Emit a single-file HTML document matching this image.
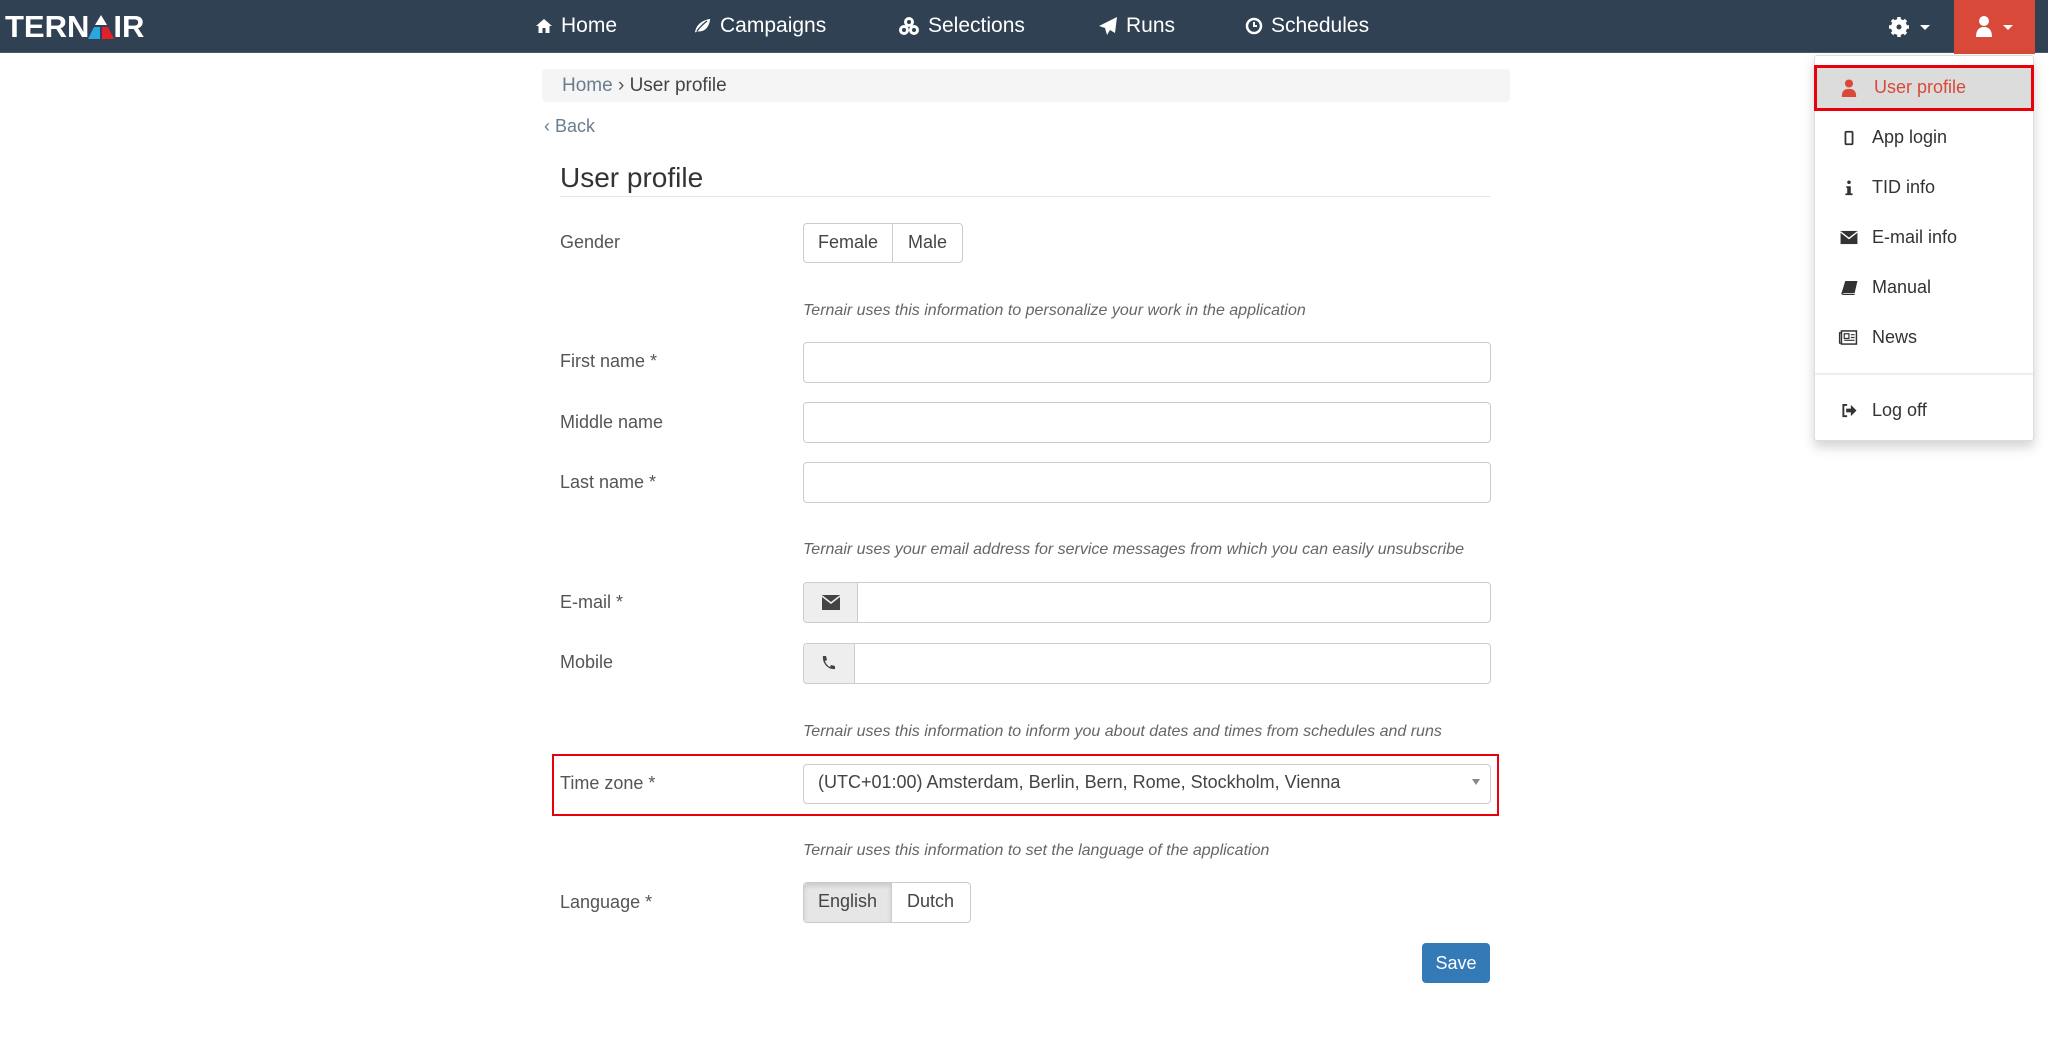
<!DOCTYPE html>
<html><head><meta charset="utf-8"><style>
*{box-sizing:border-box;margin:0;padding:0}
body{width:2048px;height:1048px;background:#fff;font-family:"Liberation Sans",sans-serif;color:#333;position:relative;overflow:hidden}
.a{position:absolute}
.nav{left:0;top:0;width:2048px;height:53px;background:#2f4152;border-bottom:1px solid #4a5a68}
.ni{color:#fff;font-size:21px;top:14px;display:flex;align-items:center;gap:8px}
.lbl{left:560px;font-size:18px;color:#555}
.inp{border:1px solid #ccc;border-radius:4px;background:#fff}
.hint{left:803px;font-size:16px;font-style:italic;color:#666}
.dd{left:1814px;top:55px;width:220px;height:386px;background:#fff;border:1px solid #ddd;border-radius:3px;box-shadow:0 6px 12px rgba(0,0,0,.18)}
.di{position:absolute;left:26px;font-size:18px;color:#333;display:flex;align-items:center}
.di svg{width:18px;margin-right:14px}
</style></head><body>
<div class="a nav"></div>
<div class="a" style="left:5px;top:9px;color:#fff;font-weight:bold;font-size:31px;letter-spacing:0;line-height:36px">TERN<svg width="26" height="26" viewBox="0 0 26 26" style="vertical-align:-3px;margin:0 -1px"><polygon points="13,1 19,11 7,11" fill="#fff"/><polygon points="6,13 12,13 12,25 0,25" fill="#2aa6e0"/><polygon points="14,13 20,13 26,25 14,25" fill="#e2202c"/></svg>IR</div>
<div class="a ni" style="left:535px"><svg width="18" height="16" viewBox="0 0 18 16"><path d="M9 1L1 8h2.5v7h4v-5h3v5h4V8H17z" fill="#fff"/></svg>Home</div>
<div class="a ni" style="left:692px"><svg width="20" height="18" viewBox="0 0 20 18"><path d="M2 17C3 8 8 3 19 1c-1 10-6 15-14 14l-3 2zM5 14c3-4 6-7 10-10" fill="#fff" stroke="#2f4152" stroke-width="1.3"/></svg>Campaigns</div>
<div class="a ni" style="left:898px"><svg width="22" height="20" viewBox="0 0 22 20"><circle cx="11" cy="6" r="5" fill="#fff"/><circle cx="6" cy="14" r="5" fill="#fff"/><circle cx="16" cy="14" r="5" fill="#fff"/><circle cx="11" cy="6" r="2" fill="#2f4152"/><circle cx="6" cy="14" r="2" fill="#2f4152"/><circle cx="16" cy="14" r="2" fill="#2f4152"/></svg>Selections</div>
<div class="a ni" style="left:1098px"><svg width="20" height="20" viewBox="0 0 20 20"><path d="M19 1L1 10l6 2 2 7 3-5 5 3z" fill="#fff"/></svg>Runs</div>
<div class="a ni" style="left:1245px"><svg width="18" height="18" viewBox="0 0 18 18"><circle cx="9" cy="9" r="7" fill="none" stroke="#fff" stroke-width="2.5"/><path d="M9 5v4h3" stroke="#fff" stroke-width="2" fill="none"/></svg>Schedules</div>
<div class="a" style="left:1888px;top:15px"><svg width="46" height="24" viewBox="0 0 46 24"><circle cx="11" cy="12" r="6" fill="none" stroke="#fff" stroke-width="4"/><g stroke="#fff" stroke-width="3.5"><path d="M11 2v20M1 12h20M4 5l14 14M18 5L4 19"/></g><circle cx="11" cy="12" r="2.5" fill="#2f4152"/><polygon points="32,10 42,10 37,15" fill="#fff"/></svg></div>
<div class="a" style="left:1954px;top:0;width:81px;height:54px;background:#d9493a"></div>
<div class="a" style="left:1976px;top:15px"><svg width="46" height="24" viewBox="0 0 46 24"><circle cx="8" cy="6" r="5" fill="#fff"/><path d="M0 22c0-7 3-10 8-10s8 3 8 10z" fill="#fff"/><polygon points="27,10 37,10 32,15" fill="#fff"/></svg></div>

<div class="a dd"></div>
<div class="a" style="left:1814px;top:65px;width:220px;height:46px;background:#dcdcdc;border:3px solid #e8000b"></div>
<div class="di" style="left:1840px;top:77px;color:#d9493a"><svg viewBox="0 0 18 20" height="18"><circle cx="9" cy="5" r="4.5" fill="#d9493a"/><path d="M1 20c0-7 3-9 8-9s8 2 8 9z" fill="#d9493a"/></svg><span style="margin-left:2px">User profile</span></div>
<div class="di" style="left:1840px;top:127px"><svg viewBox="0 0 18 18" height="16"><rect x="5" y="2" width="8" height="14" rx="1" fill="none" stroke="#333" stroke-width="2"/></svg>App login</div>
<div class="di" style="left:1840px;top:177px"><svg viewBox="0 0 18 18" height="16"><circle cx="9" cy="2.5" r="2" fill="#333"/><path d="M6 7h5v8h2v2H5v-2h2V9H6z" fill="#333"/></svg>TID info</div>
<div class="di" style="left:1840px;top:227px"><svg viewBox="0 0 18 16" height="15"><rect x="0" y="1" width="18" height="14" fill="#333"/><path d="M0 2l9 7 9-7" stroke="#fff" stroke-width="1.5" fill="none"/></svg>E-mail info</div>
<div class="di" style="left:1840px;top:277px"><svg viewBox="0 0 18 16" height="15"><path d="M5 1h13l-3 13H1z" fill="#333"/><path d="M1 14l2 1.5h12" stroke="#333" stroke-width="1.5" fill="none"/></svg>Manual</div>
<div class="di" style="left:1838px;top:327px"><svg viewBox="0 0 20 16" height="15" style="width:20px"><rect x="3" y="1" width="16" height="14" fill="none" stroke="#333" stroke-width="1.6"/><path d="M3 3H1v11h2" stroke="#333" fill="none" stroke-width="1.4"/><rect x="6" y="4" width="5" height="5" fill="none" stroke="#333" stroke-width="1.3"/><path d="M13 5h4M13 8h4M6 11h11" stroke="#333" stroke-width="1.3"/></svg>News</div>
<div class="a" style="left:1815px;top:373px;width:218px;height:2px;background:#eee"></div>
<div class="di" style="left:1840px;top:400px"><svg viewBox="0 0 18 16" height="15"><path d="M7 2H3v12h4" stroke="#333" stroke-width="2" fill="none"/><path d="M6 6h5V2l6 6-6 6v-4H6z" fill="#333"/></svg>Log off</div>

<div class="a" style="left:542px;top:69px;width:968px;height:33px;background:#f5f5f5;border-radius:4px"></div>
<div class="a" style="left:562px;top:75px;font-size:19px"><span style="color:#6a7d8f">Home</span> <span style="color:#555">›</span> <span style="color:#444">User profile</span></div>
<div class="a" style="left:544px;top:116px;font-size:18px;color:#6a7d8f">‹ Back</div>
<div class="a" style="left:560px;top:162px;font-size:28px;color:#333">User profile</div>
<div class="a" style="left:560px;top:196px;width:930px;height:1px;background:#e5e5e5"></div>

<div class="a lbl" style="top:232px">Gender</div>
<div class="a inp" style="left:803px;top:223px;width:160px;height:40px"></div>
<div class="a" style="left:892px;top:224px;width:1px;height:38px;background:#ccc"></div>
<div class="a" style="left:818px;top:232px;font-size:18px;color:#444">Female</div>
<div class="a" style="left:908px;top:232px;font-size:18px;color:#444">Male</div>

<div class="a hint" style="top:302px">Ternair uses this information to personalize your work in the application</div>
<div class="a lbl" style="top:351px">First name *</div>
<div class="a inp" style="left:803px;top:342px;width:688px;height:41px"></div>
<div class="a lbl" style="top:412px">Middle name</div>
<div class="a inp" style="left:803px;top:402px;width:688px;height:41px"></div>
<div class="a lbl" style="top:472px">Last name *</div>
<div class="a inp" style="left:803px;top:462px;width:688px;height:41px"></div>

<div class="a hint" style="top:541px">Ternair uses your email address for service messages from which you can easily unsubscribe</div>
<div class="a lbl" style="top:592px">E-mail *</div>
<div class="a inp" style="left:803px;top:582px;width:688px;height:41px"></div>
<div class="a" style="left:804px;top:583px;width:54px;height:39px;background:#eee;border-right:1px solid #ccc;border-radius:4px 0 0 4px"></div>
<svg class="a" style="left:822px;top:595px" width="18" height="15" viewBox="0 0 18 15"><rect width="18" height="15" fill="#444"/><path d="M0 1l9 7 9-7" stroke="#eee" stroke-width="1.6" fill="none"/></svg>
<div class="a lbl" style="top:652px">Mobile</div>
<div class="a inp" style="left:803px;top:643px;width:688px;height:41px"></div>
<div class="a" style="left:804px;top:644px;width:51px;height:39px;background:#eee;border-right:1px solid #ccc;border-radius:4px 0 0 4px"></div>
<svg class="a" style="left:821px;top:655px" width="14" height="16" viewBox="0 0 14 16"><path d="M2 1l3 0 1 4-2 1c1 3 3 5 5 6l1-2 4 1v3c-7 1-13-6-12-13z" fill="#444"/></svg>

<div class="a hint" style="top:723px">Ternair uses this information to inform you about dates and times from schedules and runs</div>
<div class="a" style="left:552px;top:754px;width:947px;height:62px;border:2px solid #e8000b"></div>
<div class="a lbl" style="top:773px">Time zone *</div>
<div class="a inp" style="left:803px;top:764px;width:688px;height:40px"></div>
<div class="a" style="left:818px;top:772px;font-size:18px;color:#444">(UTC+01:00) Amsterdam, Berlin, Bern, Rome, Stockholm, Vienna</div>
<div class="a" style="left:1472px;top:779px;width:0;height:0;border-left:4px solid transparent;border-right:4px solid transparent;border-top:6px solid #888"></div>

<div class="a hint" style="top:842px">Ternair uses this information to set the language of the application</div>
<div class="a lbl" style="top:892px">Language *</div>
<div class="a inp" style="left:803px;top:882px;width:168px;height:41px"></div>
<div class="a" style="left:804px;top:883px;width:88px;height:39px;background:#e6e6e6;border-right:1px solid #ccc;border-radius:4px 0 0 4px;box-shadow:inset 0 3px 5px rgba(0,0,0,.12)"></div>
<div class="a" style="left:818px;top:891px;font-size:18px;color:#444">English</div>
<div class="a" style="left:907px;top:891px;font-size:18px;color:#444">Dutch</div>

<div class="a" style="left:1422px;top:943px;width:68px;height:40px;background:#337ab7;border-radius:4px;color:#fff;font-size:18px;text-align:center;line-height:40px">Save</div>
</body></html>
